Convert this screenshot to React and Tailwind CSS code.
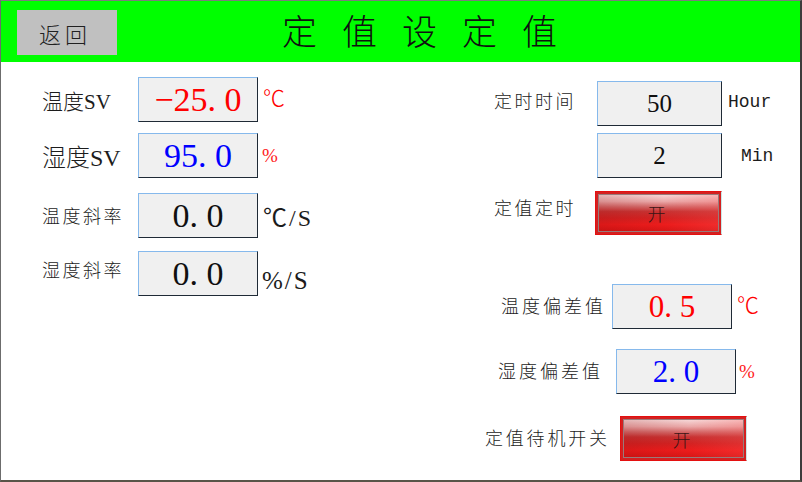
import React from "react";

const serif = "font-[family-name:Liberation_Serif,Noto_Sans_CJK_SC,serif]";

function Box({ className, children }) {
  return (
    <div
      className={
        "h-[45px] shrink-0 bg-[#f0f0f0] border border-t-[#86b9ec] border-l-[#86b9ec] border-r-[#1f2a36] border-b-[#1f2a36] flex items-center justify-center leading-none " +
        className
      }
    >
      {children}
    </div>
  );
}

function RedButton({ className }) {
  return (
    <div
      className={
        "shrink-0 border border-[#e41010] border-r-[#c8e8e8] border-t-[#e41010] p-[2px] bg-[#d42020] " +
        className
      }
    >
      <div className="w-full h-full border border-[#9a7a7a] bg-[linear-gradient(180deg,#f6d6d6_0%,#eaa8a8_18%,#d46a6a_32%,#c83232_46%,#d42222_64%,#ec1c1c_82%,#d81616_100%)]">
        <div className="w-full h-full flex items-center justify-center bg-[linear-gradient(90deg,rgba(120,0,0,0.15)_0%,rgba(255,0,0,0)_55%,rgba(255,90,90,0.25)_100%)]">
          <span className="font-[family-name:Noto_Sans_CJK_SC,sans-serif] text-[18px] leading-none text-[#3a1414] font-light -translate-x-[2px]">
            开
          </span>
        </div>
      </div>
    </div>
  );
}

export default function App() {
  return (
    <div className="w-[802px] h-[482px] flex flex-col bg-white border-t border-l border-r-2 border-b-2 border-t-[#7c7c7c] border-l-[#6c6c6c] border-r-[#3c3c3c] border-b-[#585448] overflow-hidden">
      {/* header */}
      <div className="h-[61px] shrink-0 bg-[#00ff00] flex items-start">
        <div className="ml-[16px] mt-[9px] w-[100px] h-[45px] bg-[#c0c0c0] flex items-center justify-center">
          <span className="font-[family-name:Noto_Sans_CJK_SC,sans-serif] font-light text-[22px] tracking-[4px] leading-none text-[#202020] -translate-x-[2px]">
            返回
          </span>
        </div>
        <div className="ml-[165px] mt-[11px] font-[family-name:Noto_Sans_CJK_SC,sans-serif] font-light text-[35px] tracking-[25px] leading-none text-[#101010] whitespace-nowrap">
          定值设定值
        </div>
      </div>

      {/* body */}
      <div className="flex-1 flex text-[#1c1c1c]">
        {/* left column */}
        <div className="w-[480px] shrink-0 pl-[41px] flex flex-col">
          <div className="mt-[15px] flex items-center">
            <div className={"w-[96px] text-[21px] leading-none font-light translate-y-[3px] " + serif}>温度SV</div>
            <Box className="w-[120px]">
              <span className={"text-[34px] text-[#ff0000] " + serif}>−25.&nbsp;0</span>
            </Box>
            <span className={"ml-[5px] text-[22px] text-[#ff0000] font-light leading-none -translate-y-[1px] " + serif}>℃</span>
          </div>
          <div className="mt-[11px] flex items-center">
            <div className={"w-[96px] text-[24px] leading-none font-light translate-y-[2px] " + serif}>湿度SV</div>
            <Box className="w-[120px]">
              <span className={"text-[34px] text-[#0000ff] " + serif}>95.&nbsp;0</span>
            </Box>
            <span className={"ml-[4px] text-[19px] text-[#ff2020] leading-none " + serif}>%</span>
          </div>
          <div className="mt-[15px] flex items-center">
            <div className={"w-[96px] text-[18px] leading-none tracking-[2.5px] font-light translate-y-[1px] " + serif}>温度斜率</div>
            <Box className="w-[120px]">
              <span className={"text-[34px] text-[#101010] " + serif}>0.&nbsp;0</span>
            </Box>
            <span className={"ml-[5px] text-[24px] leading-none tracking-[2px] translate-y-[2px] " + serif}>℃/S</span>
          </div>
          <div className="mt-[13px] flex items-center">
            <div className={"w-[96px] text-[18px] leading-none tracking-[2.5px] font-light -translate-y-[3px] " + serif}>湿度斜率</div>
            <Box className="w-[120px]">
              <span className={"text-[34px] text-[#101010] " + serif}>0.&nbsp;0</span>
            </Box>
            <span className={"ml-[4px] text-[25px] leading-none tracking-[2px] translate-y-[7px] " + serif}>%/S</span>
          </div>
        </div>

        {/* right column */}
        <div className="w-[318px] shrink-0 flex flex-col">
          <div className="mt-[19px] flex items-center">
            <div className={"ml-[13px] w-[103px] text-[18px] leading-none tracking-[2.5px] font-light -translate-y-[2px] " + serif}>定时时间</div>
            <Box className="w-[125px]">
              <span className={"text-[25px] text-[#101010] " + serif}>50</span>
            </Box>
            <span className="ml-[6px] font-[family-name:Liberation_Mono,monospace] text-[18px] leading-none -translate-y-[2px]">Hour</span>
          </div>
          <div className="mt-[7px] flex items-center">
            <Box className="ml-[116px] w-[125px]">
              <span className={"text-[25px] text-[#101010] " + serif}>2</span>
            </Box>
            <span className="ml-[19px] font-[family-name:Liberation_Mono,monospace] text-[18px] leading-none">Min</span>
          </div>
          <div className="mt-[13px] flex items-center">
            <div className={"ml-[13px] w-[101px] text-[18px] leading-none tracking-[2.5px] font-light -translate-y-[4px] " + serif}>定值定时</div>
            <RedButton className="w-[127px] h-[44px]" />
          </div>
          <div className="mt-[49px] flex items-center">
            <div className={"ml-[20px] w-[111px] text-[18px] leading-none tracking-[3px] font-light " + serif}>温度偏差值</div>
            <Box className="w-[120px]">
              <span className={"text-[31px] text-[#ff0000] " + serif}>0.&nbsp;5</span>
            </Box>
            <span className={"ml-[5px] text-[22px] text-[#ff0000] font-light leading-none -translate-y-[1px] " + serif}>℃</span>
          </div>
          <div className="mt-[20px] flex items-center">
            <div className={"ml-[17px] w-[118px] text-[18px] leading-none tracking-[3px] font-light " + serif}>湿度偏差值</div>
            <Box className="w-[120px]">
              <span className={"text-[31px] text-[#0000ff] " + serif}>2.&nbsp;0</span>
            </Box>
            <span className={"ml-[3px] text-[19px] text-[#ff2020] leading-none " + serif}>%</span>
          </div>
          <div className="mt-[22px] flex items-center">
            <div className={"ml-[4px] w-[135px] text-[18px] leading-none tracking-[2.8px] font-light " + serif}>定值待机开关</div>
            <RedButton className="w-[127px] h-[45px]" />
          </div>
        </div>
      </div>
    </div>
  );
}
